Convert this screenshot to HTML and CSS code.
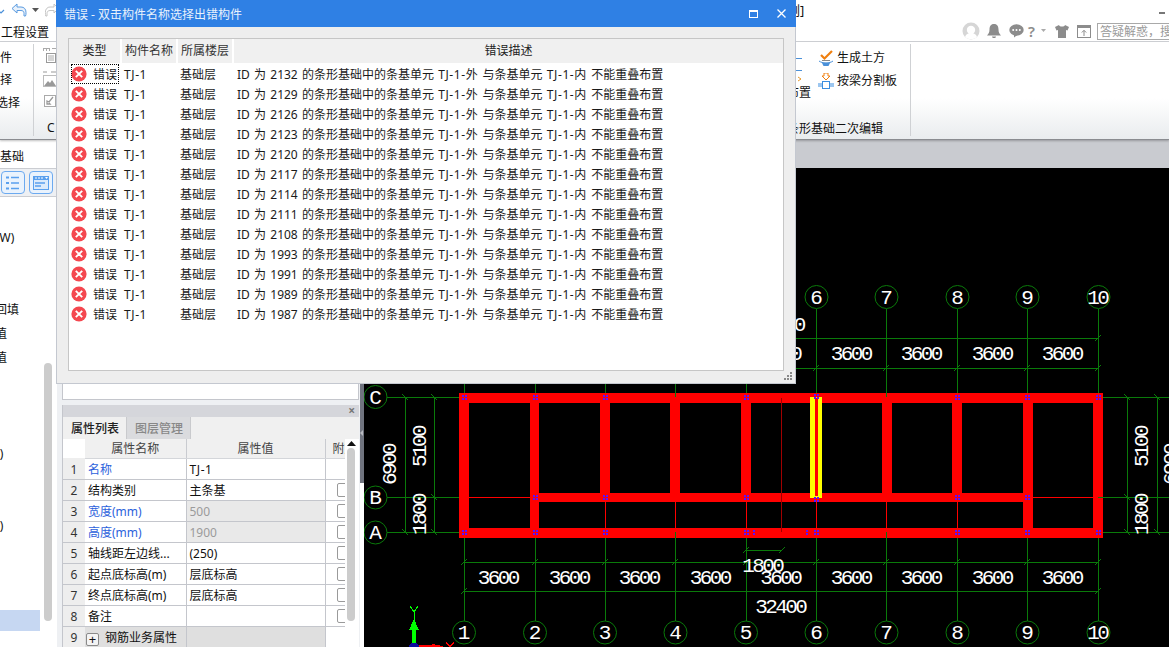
FILE: index.html
```html
<!DOCTYPE html>
<html lang="zh-CN">
<head>
<meta charset="utf-8">
<title>错误 - 双击构件名称选择出错构件</title>
<link rel="stylesheet" href="styles.css">
</head>
<body>
<svg class="sprite" width="0" height="0" aria-hidden="true">
  <defs>
    <g id="err"><circle cx="8" cy="8" r="7.6" fill="#f4474f"/><path d="M4.800 4.800l6.400 6.400M11.200 4.800l-6.400 6.400" stroke="#fff" stroke-width="1.900" fill="none"/></g>
    <g id="m" fill="#5a10ff" shape-rendering="crispEdges"><rect x="-2" y="-2" width="2" height="2"/><rect x="1" y="-2" width="2" height="2"/><rect x="-2" y="1" width="2" height="2"/><rect x="1" y="1" width="2" height="2"/></g>
    <circle id="b" r="11.5" fill="#000" stroke="#0a7a0a"/>
  </defs>
</svg>
<div class="app">
  <header class="top">
    <div class="top-row">
      <div class="quick">
        <svg class="q-chev" width="6" height="20" viewBox="0 0 6 20"><path d="M-2 9l3 3 3-3" fill="none" stroke="#4a90d9" stroke-width="1.2"/></svg>
        <svg class="q-undo" width="16" height="14" viewBox="0 0 16 14"><path d="M6 1L1 5.500 6 10V7.500h4c2 0 3 1.200 3 3V13h1.500c.5-1 .5-2 .5-3.500C15 6 13 4 10 4H6z" fill="#e8f1fb" stroke="#5a9be0"/></svg>
        <svg class="q-drop" width="8" height="5" viewBox="0 0 8 5"><path d="M0 0h7L3.500 4z" fill="#555"/></svg>
        <svg class="q-redo" width="14" height="14" viewBox="0 0 14 14"><path d="M9 1l4.500 4.500L9 10V7.500H5c-2 0-3 1.200-3 3V13H.8C.3 12 .3 11 .3 9.500.3 6 2.500 4 5 4h4z" fill="#fff" stroke="#c4c4c4"/></svg>
      </div>
      <span class="doc-title">例]</span>
      <span class="min-btn"></span>
    </div>
    <div class="top-row top-row-2">
      <span class="menu-item">工程设置</span>
      <div class="tools">
        <svg width="18" height="18" viewBox="0 0 18 18"><circle cx="9" cy="9" r="8.500" fill="#d6d6d6"/><circle cx="9" cy="8" r="4.200" fill="#fff"/><path d="M3 15c1-3 3-4 6-4s5 1 6 4c-3 3-9 3-12 0z" fill="#fff"/></svg>
        <svg class="t-bell" width="14" height="15" viewBox="0 0 14 15"><path d="M7 0c-3.500 0-4.500 2.500-4.500 5.500 0 3-1 4.500-2.500 6h14c-1.500-1.500-2.500-3-2.500-6C11.500 2.500 10.500 0 7 0z" fill="#8c8c8c"/><path d="M5 12.500h4c0 2-4 2-4 0z" fill="#8c8c8c"/></svg>
        <svg class="t-chat" width="15" height="14" viewBox="0 0 15 14"><ellipse cx="7.500" cy="6" rx="7.200" ry="5.800" fill="#8c8c8c"/><path d="M5 10.500v3l4-3z" fill="#8c8c8c"/><circle cx="4.200" cy="6" r="1" fill="#fff"/><circle cx="7.500" cy="6" r="1" fill="#fff"/><circle cx="10.800" cy="6" r="1" fill="#fff"/></svg>
        <span class="t-help">?</span>
        <svg class="t-hdrop" width="6" height="4" viewBox="0 0 6 4"><path d="M0 0h5L2.500 3z" fill="#aaa"/></svg>
        <svg class="t-shirt" width="14" height="13" viewBox="0 0 14 13"><path d="M4 0L0 2l1.500 3.500L3 5v8h8V5l1.500.5L14 2l-4-2c-.5 2-5.500 2-6 0z" fill="#8c8c8c"/></svg>
        <svg class="t-up" width="14" height="13" viewBox="0 0 14 13"><rect x=".5" y=".5" width="13" height="12" fill="#fff" stroke="#8c8c8c"/><rect x="0" y="0" width="14" height="3" fill="#8c8c8c"/><path d="M7 11V5.500M4.800 7.500L7 5.300l2.200 2.200" fill="none" stroke="#8c8c8c"/></svg>
        <div class="search">答疑解惑，搜索</div>
      </div>
    </div>
  </header>

  <section class="ribbon">
    <div class="rib-a">
      <span class="rib-line clip-12">文件</span>
      <span class="rib-line clip-12">选择</span>
      <span class="rib-line clip-4">选择</span>
    </div>
    <div class="rib-b">
      <svg width="14" height="16" viewBox="0 0 14 16"><path d="M0 .5h7M9 .5h5M.5 0v3M6.500 0v3M3.500 0v3" stroke="#aaa" fill="none"/><rect x="3.500" y="5.500" width="9" height="9" fill="#fff" stroke="#999"/><path d="M5 8h6M5 10h6M5 12h6" stroke="#aaa"/></svg>
      <svg width="14" height="16" viewBox="0 0 14 16"><path d="M0 1h4M8 1h6" stroke="#999"/><rect x=".5" y="4.500" width="13" height="11" fill="#fff" stroke="#bbb"/><path d="M1 15l4-5 2 2 2-3 4 6z" fill="#999"/></svg>
      <svg width="14" height="14" viewBox="0 0 14 14"><rect x="1.500" y="1.500" width="11" height="11" fill="#fff" stroke="#aaa"/><path d="M10 3L6 8 4 7v3h3L6 9" fill="none" stroke="#999" stroke-width="1.300"/></svg>
      <span class="rib-b-label">C</span>
    </div>
    <div class="rib-gap"></div>
    <div class="rib-c">
      <div class="rib-c-main">
        <div class="rib-c-col1">
          <svg width="9" height="26" viewBox="0 0 9 26"><path d="M0 .5h6M0 12.500h6" stroke="#4a90d9" fill="none"/><path d="M2 19l3 2-3 2" stroke="#e89a2a" fill="none"/></svg>
          <span class="rib-cut">布置</span>
        </div>
        <div class="rib-c-col2">
          <div class="rib-act">
            <svg width="16" height="17" viewBox="0 0 16 17"><path d="M3 5l3.500 3.500L14 1" fill="none" stroke="#f08010" stroke-width="2.200"/><path d="M1 11c3 2.500 11 2.500 14 0" fill="none" stroke="#4a90d9"/><path d="M4 13h8l-1.500 3h-5z" fill="#4a90d9"/><path d="M4 10.500h8" stroke="#888"/></svg>
            <span>生成土方</span>
          </div>
          <div class="rib-act">
            <svg width="16" height="17" viewBox="0 0 16 17"><path d="M6 0h4v3h2L8 7 4 3h2z" fill="#fff" stroke="#f08010"/><rect x="4.500" y="8.500" width="7" height="7" fill="#fff" stroke="#3a8ee0"/><path d="M0 11h4M12 11h4M0 13h4M12 13h4" stroke="#3a8ee0"/></svg>
            <span>按梁分割板</span>
          </div>
        </div>
      </div>
      <span class="rib-c-label">条形基础二次编辑</span>
    </div>
    <div class="rib-tail"></div>
  </section>

  <main class="work">
    <aside class="side">
      <div class="side-nav">
        <div class="side-search">基础</div>
        <div class="side-btns">
          <button class="tool-btn" type="button"><svg width="14" height="14" viewBox="0 0 14 14"><path d="M0 1.500h3M0 7h3M0 12.500h3" stroke="#5aa0ee" stroke-width="2"/><path d="M5 1.500h8M5 7h8M5 12.500h8" stroke="#5aa0ee" stroke-width="1.300"/></svg></button>
          <button class="tool-btn" type="button"><svg width="16" height="14" viewBox="0 0 16 14"><rect width="16" height="14" fill="#5aa0ee"/><rect x="1" y="4" width="14" height="9" fill="#dcebfb"/><path d="M2 2h2M5 2h2M8 2h2" stroke="#fff"/><path d="M12 1h3l-1.500 2z" fill="#fff"/><path d="M2 7h10M2 10h6" stroke="#5aa0ee" stroke-width="1.300"/></svg></button>
        </div>
        <div class="side-list">
          <ul class="tree">
            <li class="clip-w">(W)</li><li></li><li></li>
            <li class="clip-5">回填</li><li class="clip-5">值</li><li class="clip-5">值</li>
            <li></li><li></li><li></li>
            <li class="clip-r">0)</li><li></li><li></li>
            <li class="clip-r">0)</li><li></li><li></li><li></li>
            <li class="sel"></li>
          </ul>
          <div class="side-track"><div class="side-thumb"></div></div>
        </div>
      </div>
      <div class="panes">
        <div class="pane-up"></div>
        <section class="props">
          <div class="props-head"><span class="props-x">×</span></div>
          <div class="tabs"><span class="tab on">属性列表</span><span class="tab">图层管理</span></div>
          <div class="props-body">
            <table class="ptable">
              <thead><tr><th class="n0"></th><th class="c-name">属性名称</th><th class="c-val">属性值</th><th class="c-att"><span class="att-clip">附加</span></th></tr></thead>
              <tbody>
                <tr><td class="n">1</td><td class="blue">名称</td><td class="tj">TJ-1</td><td class="att"></td></tr>
                <tr><td class="n">2</td><td>结构类别</td><td>主条基</td><td class="att"><i class="chk"></i></td></tr>
                <tr><td class="n">3</td><td class="blue">宽度(mm)</td><td class="ro">500</td><td class="att"><i class="chk"></i></td></tr>
                <tr><td class="n">4</td><td class="blue">高度(mm)</td><td class="ro">1900</td><td class="att"><i class="chk"></i></td></tr>
                <tr><td class="n">5</td><td>轴线距左边线...</td><td>(250)</td><td class="att"><i class="chk"></i></td></tr>
                <tr><td class="n">6</td><td>起点底标高(m)</td><td>层底标高</td><td class="att"><i class="chk"></i></td></tr>
                <tr><td class="n">7</td><td>终点底标高(m)</td><td>层底标高</td><td class="att"><i class="chk"></i></td></tr>
                <tr><td class="n">8</td><td>备注</td><td></td><td class="att"><i class="chk"></i></td></tr>
                <tr class="grp"><td class="n">9</td><td class="grp-name"><span class="plus">+</span>钢筋业务属性</td><td></td><td class="att"></td></tr>
              </tbody>
            </table>
            <div class="p-track"><svg class="p-up" width="9" height="5" viewBox="0 0 9 5"><path d="M4.500 0L9 5H0z" fill="#111"/></svg><div class="p-thumb"></div></div>
          </div>
        </section>
      </div>
    </aside>
    <div class="stage">
      <div class="stage-strip"></div>
      <div class="stage-row">
        <div class="splitter"><span class="split-grip"></span></div>
        <svg class="cad" width="805" height="479" viewBox="364 168 805 479">
          <g class="gl" shape-rendering="crispEdges">
            <path d="M464.500 309V393M535.500 309V393M605.500 309V393M675.500 309V397M746.500 309V393M816.500 309V397M886.500 309V397M957.500 309V393M1027.500 309V393M1098.500 309V393"/>
            <path d="M464.500 537V621M535.500 537V621M605.500 537V621M675.500 532V621M746.500 537V621M816.500 537V621M886.500 532V621M957.500 537V621M1027.500 537V621M1098.500 537V621"/>
            <path d="M464 338.500H1099M464 368.500H1099M464 562.500H1099M464 591.500H1099M746 550.500H782"/>
            <path d="M376 397.500H460M376 497.500H464M376 532.500H460M1098 397.500H1169M1098 497.500H1169M1098 532.500H1169"/>
            <path d="M405.500 397V533M434.500 397V533M1127.500 397V533M1157.500 397V533"/>
          </g>
          <path class="gl" d="M1095 341l6-6M461 371l6-6M532 371l6-6M602 371l6-6M672 371l6-6M743 371l6-6M813 371l6-6M883 371l6-6M954 371l6-6M1024 371l6-6M1095 371l6-6M461 565l6-6M532 565l6-6M602 565l6-6M672 565l6-6M743 565l6-6M813 565l6-6M883 565l6-6M954 565l6-6M1024 565l6-6M1095 565l6-6M461 594l6-6M1095 594l6-6M743 553l6-6M779 553l6-6M402 394l6 6M402 529l6 6M431 394l6 6M431 494l6 6M431 529l6 6M1124 394l6 6M1124 494l6 6M1124 529l6 6M1154 394l6 6M1154 529l6 6"/>

          <g fill="#f00" shape-rendering="crispEdges">
            <rect x="459" y="393" width="644" height="10"/>
            <rect x="530" y="493" width="503" height="9"/>
            <rect x="459" y="528" width="644" height="10"/>
            <rect x="459" y="393" width="10" height="145"/>
            <rect x="530" y="393" width="9" height="145"/>
            <rect x="600" y="393" width="10" height="109"/>
            <rect x="670" y="393" width="10" height="109"/>
            <rect x="741" y="393" width="10" height="109"/>
            <rect x="882" y="393" width="10" height="109"/>
            <rect x="952" y="393" width="10" height="109"/>
            <rect x="1023" y="393" width="10" height="145"/>
            <rect x="1093" y="393" width="10" height="145"/>
          </g>
          <g class="rl" shape-rendering="crispEdges">
            <path d="M469 497.500H530M1033 497.500H1093M605.500 502V528M675.500 502V528M746.500 502V528M816.500 502V528M886.500 502V528M957.500 502V528"/>
          </g>
          <path class="dl" shape-rendering="crispEdges" d="M781.500 398V532"/>
          <g class="gl" shape-rendering="crispEdges"><path d="M675.500 393V397M886.500 393V397M675.500 532V538M886.500 532V538M1098 497.500H1103"/></g>

          <g shape-rendering="crispEdges">
            <rect x="810" y="397" width="12" height="101" fill="#ff0"/>
            <rect x="815" y="398" width="3" height="98" fill="#f00"/>
          </g>

          <g>
            <use href="#m" x="464" y="397"/><use href="#m" x="535" y="397"/><use href="#m" x="605" y="397"/><use href="#m" x="746" y="397"/><use href="#m" x="816" y="396"/><use href="#m" x="957" y="397"/><use href="#m" x="1027" y="397"/><use href="#m" x="1098" y="397"/>
            <use href="#m" x="535" y="497"/><use href="#m" x="605" y="497"/><use href="#m" x="746" y="497"/><use href="#m" x="816" y="499"/><use href="#m" x="957" y="497"/><use href="#m" x="1027" y="497"/>
            <use href="#m" x="464" y="532"/><use href="#m" x="535" y="532"/><use href="#m" x="605" y="532"/><use href="#m" x="746" y="532"/><use href="#m" x="816" y="532"/><use href="#m" x="957" y="532"/><use href="#m" x="1027" y="532"/><use href="#m" x="1098" y="532"/>
            <g fill="#5a10ff" shape-rendering="crispEdges"><rect x="753" y="530" width="2" height="2"/><rect x="753" y="533" width="2" height="2"/><rect x="806" y="530" width="2" height="2"/><rect x="806" y="533" width="2" height="2"/></g>
          </g>

          <g>
            <use href="#b" x="464" y="297"/><use href="#b" x="535" y="297"/><use href="#b" x="605" y="297"/><use href="#b" x="675" y="297"/><use href="#b" x="746" y="297"/><use href="#b" x="816.500" y="297"/><use href="#b" x="886.500" y="297"/><use href="#b" x="957.500" y="297"/><use href="#b" x="1027.500" y="297"/><use href="#b" x="1098.500" y="297"/>
            <use href="#b" x="464" y="632.500"/><use href="#b" x="535" y="632.500"/><use href="#b" x="605" y="632.500"/><use href="#b" x="675.500" y="632.500"/><use href="#b" x="746" y="632.500"/><use href="#b" x="816.500" y="632.500"/><use href="#b" x="886.500" y="632.500"/><use href="#b" x="957.500" y="632.500"/><use href="#b" x="1027.500" y="632.500"/><use href="#b" x="1098.500" y="632.500"/>
            <use href="#b" x="375.500" y="397"/><use href="#b" x="375.500" y="497.500"/><use href="#b" x="375.500" y="532.500"/>
          </g>

          <g class="cad-t">
            <text x="816.500" y="303.500">6</text><text x="886.500" y="303.500">7</text><text x="957.500" y="303.500">8</text><text x="1027.500" y="303.500">9</text><text x="1098.500" y="303.500">10</text>
            <text x="464" y="639">1</text><text x="535" y="639">2</text><text x="605" y="639">3</text><text x="675.500" y="639">4</text><text x="746" y="639">5</text><text x="816.500" y="639">6</text><text x="886.500" y="639">7</text><text x="957.500" y="639">8</text><text x="1027.500" y="639">9</text><text x="1098.500" y="639">10</text>
            <text x="375.500" y="403.500">C</text><text x="375.500" y="504">B</text><text x="375.500" y="539">A</text>

            <text x="780" y="331">32400</text>
            <text x="781.500" y="360">3600</text><text x="852" y="360">3600</text><text x="922" y="360">3600</text><text x="993" y="360">3600</text><text x="1063" y="360">3600</text>
            <text x="499" y="584">3600</text><text x="570" y="584">3600</text><text x="640" y="584">3600</text><text x="711" y="584">3600</text><text x="781.500" y="584">3600</text><text x="852" y="584">3600</text><text x="922" y="584">3600</text><text x="993" y="584">3600</text><text x="1063" y="584">3600</text>
            <text x="763.500" y="572">1800</text>
            <text x="781.500" y="613">32400</text>

            <text transform="translate(397 465) rotate(-90)">6900</text>
            <text transform="translate(427 447) rotate(-90)">5100</text>
            <text transform="translate(427 515) rotate(-90)">1800</text>
            <text transform="translate(1149 447) rotate(-90)">5100</text>
            <text transform="translate(1149 515) rotate(-90)">1800</text>
            <text transform="translate(1178 465) rotate(-90)">6900</text>
          </g>

          <g shape-rendering="crispEdges">
            <path d="M410 606l4 6 4-6M414 612V620" fill="none" stroke="#0f0"/>
            <path d="M414 619l5 11h-3v13h-4V630h-3z" fill="#0f0"/>
            <circle cx="414" cy="648" r="5.500" fill="#0a0a9a"/>
            <path d="M419 645h13v-1l11 2v1H419z" fill="#f00"/>
            <path d="M446 642l4 5 4-5M450 647v3" fill="none" stroke="#f00" stroke-width="1.300"/>
          </g>
        </svg>
      </div>
    </div>
  </main>

  <section class="dialog" role="dialog">
    <div class="dlg-bar">
      <span class="dlg-title">错误 - 双击构件名称选择出错构件</span>
      <div class="dlg-ctl">
        <svg width="9" height="8" viewBox="0 0 9 8"><rect x=".5" y="1" width="8" height="6.500" fill="none" stroke="#fff"/><path d="M0 1h9" stroke="#fff" stroke-width="2"/></svg>
        <svg width="9" height="9" viewBox="0 0 9 9"><path d="M.5.500l8 8M8.500.500l-8 8" stroke="#fff" stroke-width="1.300"/></svg>
      </div>
    </div>
    <div class="dlg-body">
      <div class="dlg-box">
        <table class="errs">
          <thead>
            <tr><th class="e1"><span>类型</span></th><th class="e2"><span>构件名称</span></th><th class="e3"><span>所属楼层</span></th><th class="e4"><span>错误描述</span></th></tr>
          </thead>
          <tbody>
            <tr><td><div class="etype focus"><svg width="16" height="16"><use href="#err"/></svg><span>错误</span></div></td><td class="tj">TJ-1</td><td>基础层</td><td class="desc">ID 为 2132 的条形基础中的条基单元 <span class="tj">TJ-1-外</span> 与条基单元 <span class="tj">TJ-1-内</span> 不能重叠布置</td></tr>
            <tr><td><div class="etype"><svg width="16" height="16"><use href="#err"/></svg><span>错误</span></div></td><td class="tj">TJ-1</td><td>基础层</td><td class="desc">ID 为 2129 的条形基础中的条基单元 <span class="tj">TJ-1-外</span> 与条基单元 <span class="tj">TJ-1-内</span> 不能重叠布置</td></tr>
            <tr><td><div class="etype"><svg width="16" height="16"><use href="#err"/></svg><span>错误</span></div></td><td class="tj">TJ-1</td><td>基础层</td><td class="desc">ID 为 2126 的条形基础中的条基单元 <span class="tj">TJ-1-外</span> 与条基单元 <span class="tj">TJ-1-内</span> 不能重叠布置</td></tr>
            <tr><td><div class="etype"><svg width="16" height="16"><use href="#err"/></svg><span>错误</span></div></td><td class="tj">TJ-1</td><td>基础层</td><td class="desc">ID 为 2123 的条形基础中的条基单元 <span class="tj">TJ-1-外</span> 与条基单元 <span class="tj">TJ-1-内</span> 不能重叠布置</td></tr>
            <tr><td><div class="etype"><svg width="16" height="16"><use href="#err"/></svg><span>错误</span></div></td><td class="tj">TJ-1</td><td>基础层</td><td class="desc">ID 为 2120 的条形基础中的条基单元 <span class="tj">TJ-1-外</span> 与条基单元 <span class="tj">TJ-1-内</span> 不能重叠布置</td></tr>
            <tr><td><div class="etype"><svg width="16" height="16"><use href="#err"/></svg><span>错误</span></div></td><td class="tj">TJ-1</td><td>基础层</td><td class="desc">ID 为 2117 的条形基础中的条基单元 <span class="tj">TJ-1-外</span> 与条基单元 <span class="tj">TJ-1-内</span> 不能重叠布置</td></tr>
            <tr><td><div class="etype"><svg width="16" height="16"><use href="#err"/></svg><span>错误</span></div></td><td class="tj">TJ-1</td><td>基础层</td><td class="desc">ID 为 2114 的条形基础中的条基单元 <span class="tj">TJ-1-外</span> 与条基单元 <span class="tj">TJ-1-内</span> 不能重叠布置</td></tr>
            <tr><td><div class="etype"><svg width="16" height="16"><use href="#err"/></svg><span>错误</span></div></td><td class="tj">TJ-1</td><td>基础层</td><td class="desc">ID 为 2111 的条形基础中的条基单元 <span class="tj">TJ-1-外</span> 与条基单元 <span class="tj">TJ-1-内</span> 不能重叠布置</td></tr>
            <tr><td><div class="etype"><svg width="16" height="16"><use href="#err"/></svg><span>错误</span></div></td><td class="tj">TJ-1</td><td>基础层</td><td class="desc">ID 为 2108 的条形基础中的条基单元 <span class="tj">TJ-1-外</span> 与条基单元 <span class="tj">TJ-1-内</span> 不能重叠布置</td></tr>
            <tr><td><div class="etype"><svg width="16" height="16"><use href="#err"/></svg><span>错误</span></div></td><td class="tj">TJ-1</td><td>基础层</td><td class="desc">ID 为 1993 的条形基础中的条基单元 <span class="tj">TJ-1-外</span> 与条基单元 <span class="tj">TJ-1-内</span> 不能重叠布置</td></tr>
            <tr><td><div class="etype"><svg width="16" height="16"><use href="#err"/></svg><span>错误</span></div></td><td class="tj">TJ-1</td><td>基础层</td><td class="desc">ID 为 1991 的条形基础中的条基单元 <span class="tj">TJ-1-外</span> 与条基单元 <span class="tj">TJ-1-内</span> 不能重叠布置</td></tr>
            <tr><td><div class="etype"><svg width="16" height="16"><use href="#err"/></svg><span>错误</span></div></td><td class="tj">TJ-1</td><td>基础层</td><td class="desc">ID 为 1989 的条形基础中的条基单元 <span class="tj">TJ-1-外</span> 与条基单元 <span class="tj">TJ-1-内</span> 不能重叠布置</td></tr>
            <tr><td><div class="etype"><svg width="16" height="16"><use href="#err"/></svg><span>错误</span></div></td><td class="tj">TJ-1</td><td>基础层</td><td class="desc">ID 为 1987 的条形基础中的条基单元 <span class="tj">TJ-1-外</span> 与条基单元 <span class="tj">TJ-1-内</span> 不能重叠布置</td></tr>
          </tbody>
        </table>
      </div>
      <svg class="grip" width="9" height="9" viewBox="0 0 9 9"><path d="M6 0h2v2H6zM3 3h2v2H3zM6 3h2v2H6zM0 6h2v2H0zM3 6h2v2H3zM6 6h2v2H6z" fill="#888"/></svg>
    </div>
  </section>
</div>
</body>
</html>
```

FILE: styles.css
```css
* { box-sizing: border-box; }
html, body { margin: 0; padding: 0; background: #fff; }
body { font: 12px/1.2 "Noto Sans", "Noto Sans CJK SC", sans-serif; color: #111; overflow: hidden; }
.sprite { position: absolute; }
svg { flex-shrink: 0; }
.tj { letter-spacing: .6px; }

.app {
  position: relative;
  width: 1169px;
  height: 647px;
  overflow: hidden;
  display: grid;
  grid-template-rows: 42px 98px 507px;
  background: #fff;
}

/* top bar */
.top { display: flex; flex-direction: column; border-bottom: 1px solid #d0d2d6; background: #fff; }
.top-row { display: flex; align-items: center; height: 21px; }
.top-row-2 { height: 20px; }
.quick { display: flex; align-items: center; height: 20px; }
.q-chev { margin-right: 5px; }
.q-undo { margin-right: 5px; margin-top: -2px; }
.q-drop { margin-right: 5px; }
.q-redo { margin-top: -2px; }
.doc-title { margin-left: auto; font-size: 13px; margin-right: 356px; width: 16px; white-space: nowrap; padding-top: 1px; }
.min-btn { width: 6px; height: 2px; background: #777; margin-right: 4px; margin-top: 5px; }
.menu-item { margin-left: 1px; font-size: 12px; line-height: 20px; padding-top: 3px; }
.tools { margin-left: auto; display: flex; align-items: center; width: 207px; flex-shrink: 0; }
.t-bell { margin-left: 7px; }
.t-chat { margin-left: 8px; }
.t-help { margin-left: 4px; font-size: 15px; line-height: 16px; color: #8c8c8c; font-weight: 600; width: 9px; }
.t-hdrop { margin-left: 6px; }
.t-shirt { margin-left: 8px; }
.t-up { margin-left: 8px; }
.search {
  margin-left: 6px;
  width: 80px;
  flex-shrink: 0;
  height: 17px;
  border: 1px solid #a9a9a9;
  border-right: 0;
  padding-left: 2px;
  font-size: 12px;
  line-height: 15px;
  color: #9a9a9a;
  white-space: nowrap;
  overflow: hidden;
}

/* ribbon */
.ribbon {
  display: flex;
  background: linear-gradient(#fff 0, #fff 58%, #e9ecee 100%);
  border-bottom: 1px solid #8a8c90;
  box-shadow: 0 1px 2px rgba(0,0,0,.25);
  position: relative;
  z-index: 1;
}
.rib-a {
  width: 34px;
  margin: 2px 0 3px;
  padding-top: 7px;
  border-right: 1px solid #cfd1d4;
  display: flex;
  flex-direction: column;
  gap: 8px;
  overflow: hidden;
}
.rib-line { line-height: 14.400px; white-space: nowrap; }
.clip-12 { margin-left: -12px; }
.clip-4 { margin-left: -4px; }
.clip-5 { margin-left: -5px; }
.rib-b {
  width: 40px;
  padding: 6px 0 0 9px;
  display: flex;
  flex-direction: column;
  align-items: flex-start;
  gap: 7px;
}
.rib-b-label { margin-top: 6px; margin-left: 4px; font-size: 12px; }
.rib-gap { flex: 1; }
.rib-c {
  width: 124px;
  margin: 2px 0 3px;
  border-right: 1px solid #cfd1d4;
  display: flex;
  flex-direction: column;
  justify-content: space-between;
}
.rib-c-main { display: flex; padding-top: 6px; }
.rib-c-col1 { width: 31px; padding-left: 9px; display: flex; flex-direction: column; align-items: flex-start; padding-top: 8px; }
.rib-cut { margin-left: -9px; margin-top: 2px; white-space: nowrap; }
.rib-c-col2 { display: flex; flex-direction: column; gap: 6px; }
.rib-act { display: flex; align-items: center; gap: 3px; height: 17px; white-space: nowrap; }
.rib-c-label { white-space: nowrap; }
.rib-tail { width: 258px; }

/* work area */
.work { display: grid; grid-template-columns: 360px 809px; min-height: 0; }
.side { display: grid; grid-template-columns: 57px 303px; min-height: 0; }
.side-nav { display: flex; flex-direction: column; padding-top: 4px; border-right: 1px solid #c6cad2; width: 58px; }
.side-search { height: 24px; line-height: 25px; white-space: nowrap; }
.side-btns {
  display: flex;
  gap: 4px;
  height: 29px;
  padding: 2px 0 3px 1px;
  background: #eef0f3;
  border-bottom: 1px solid #cbcdd2;
  border-top: 1px solid #cbcdd2;
}
.tool-btn {
  width: 24px;
  height: 23px;
  padding: 0;
  border: 1px solid #6caaf0;
  border-radius: 4px;
  background: #eaf3fd;
  display: flex;
  align-items: center;
  justify-content: center;
}
.side-list { flex: 1; display: flex; min-height: 0; }
.tree { list-style: none; margin: 0; padding: 28px 0 0; width: 44px; overflow: hidden; }
.tree li { height: 24px; line-height: 26px; white-space: nowrap; }
.clip-w { margin-left: -4px; }
.clip-r { margin-left: -7px; }
.tree .sel { background: #c6d7f2; width: 40px; height: 21px; margin-top: 1px; }
.side-track { width: 8px; padding-top: 166px; }
.side-thumb { height: 258px; background: #ccc; border-radius: 4px; }

.panes { background: #eef0f3; padding-left: 5px; display: flex; flex-direction: column; gap: 5px; }
.pane-up { height: 260px; background: #fff; border: 1px solid #c4c6cc; border-top: 0; margin-right: 1px; }
.props { flex: 1; min-height: 0; background: #fff; border-left: 1px solid #c4c6cc; display: flex; flex-direction: column; margin-right: 1px; }
.props-head { height: 12px; background: #d5d6db; display: flex; justify-content: flex-end; align-items: center; padding-right: 4px; }
.props-x { color: #777; font-size: 12px; line-height: 12px; font-weight: 700; }
.tabs { height: 22px; background: #f0f0f0; display: flex; flex-shrink: 0; }
.tab { width: 64px; text-align: center; line-height: 24px; color: #888; background: #dadbde; border-right: 1px solid #c9cacd; font-weight: 500; padding-left: 1px; }
.tab.on { color: #222; background: #f0f0f0; }
.props-body { flex: 1; min-height: 0; display: flex; overflow: hidden; }
.ptable { width: 282px; flex-shrink: 0; table-layout: fixed; border-collapse: collapse; align-self: flex-start; }
.ptable th { height: 19px; font-weight: 400; padding: 1px 0 0; background: #f0f0f0; color: #444; border-right: 1px solid #c9cbd0; border-bottom: 1px solid #d4d6da; }
.ptable .n0 { width: 22px; background: #fff; border-right: 0; border-bottom: 0; }
.ptable .c-name { width: 101px; }
.ptable .c-val { width: 139px; }
.ptable .c-att { width: 20px; border-right: 0; overflow: hidden; }
.att-clip { display: block; width: 20px; white-space: nowrap; overflow: hidden; padding-left: 7px; }
.ptable td { height: 21px; padding: 3px 3px 0; border-right: 1px solid #c4c6cc; border-bottom: 1px solid #c4c6cc; white-space: nowrap; overflow: hidden; }
.ptable .n { background: #eeeeee; text-align: center; padding: 3px 0 0; color: #333; border-right: 0; }
.ptable .blue { color: #2c62dc; }
.ptable .ro { background: #e9e9e9; color: #9b9b9b; }
.ptable .att { border-right: 0; padding: 0 0 0 11px; overflow: hidden; }
.chk { display: block; width: 14px; height: 14px; border: 1px solid #9a9a9a; border-radius: 2px; background: #fff; }
.grp td { background: #dfdfdf; }
.grp td.n { background: #eee; }
.grp td.att { background: #fff; }
.ptable .grp-name { padding-left: 1px; }
.plus { display: inline-block; width: 13px; height: 13px; margin-right: 6px; border: 1px solid #8a8a8a; border-radius: 2px; background: #f4f4f4; line-height: 10px; text-align: center; font-size: 13px; vertical-align: -2px; }
.p-track { flex: 1; position: relative; display: flex; flex-direction: column; align-items: center; padding: 2px 1px 0 0; border-right: 1px solid transparent; }
.p-up { flex-shrink: 0; }
.p-thumb { width: 8px; height: 173px; margin-top: 2px; background: #ccc; border-radius: 4px; }

.stage { display: flex; flex-direction: column; min-width: 0; }
.stage-strip { height: 28px; background: #c9cbd0; }
.stage-row { flex: 1; display: flex; min-height: 0; }
.splitter { width: 4px; height: 100%; background: linear-gradient(#70747f 0, #70747f 315px, #fff 315px); position: relative; }
.split-grip { position: absolute; left: 0; top: 262px; border: 3px solid transparent; border-left: 0; border-right: 3px solid #b8bac0; }
.cad { display: block; background: #000; flex-shrink: 0; }
.gl { fill: none; stroke: #0a7a0a; stroke-width: 1; }
.rl { fill: none; stroke: #f00; stroke-width: 1; }
.dl { fill: none; stroke: #a00000; stroke-width: 1; }
.cad-t { transform: translateX(-1.300px); }
.cad-t text { font-family: "Liberation Mono", monospace; font-size: 21px; letter-spacing: -2.600px; fill: #fff; text-anchor: middle; }

/* dialog */
.dialog {
  position: absolute;
  left: 56px;
  top: 0;
  width: 740px;
  height: 384px;
  z-index: 5;
  background: #eeeeee;
  border: 1px solid #c4c8d0;
  border-top: 0;
  display: flex;
  flex-direction: column;
}
.dlg-bar { height: 27px; margin: 0 -1px; background: #2f80e4; color: #e8f1fc; display: flex; align-items: center; justify-content: space-between; padding: 0 10px 0 8px; flex-shrink: 0; }
.dlg-title { font-size: 12px; padding-top: 3px; }
.dlg-ctl { display: flex; gap: 19px; align-items: center; }
.dlg-body { flex: 1; padding: 11px 11px 12px 11px; position: relative; }
.dlg-box { height: 100%; background: #fff; border: 1px solid #c6c6c6; overflow: hidden; }
.grip { position: absolute; right: 2px; bottom: 2px; }

.errs { width: 100%; table-layout: fixed; border-collapse: collapse; }
.errs th { height: 25px; padding: 0 2px 1px 0; font-weight: 400; }
.errs th.e4 { padding-right: 0; }
.errs th span { display: flex; align-items: center; justify-content: center; height: 24px; padding-top: 1px; background: #f0f0f0; color: #222; }
.errs th.e2 span, .errs th.e3 span { color: #333; }
.e1 { width: 53px; }
.e2 { width: 56px; }
.e3 { width: 56px; }
.errs td { height: 20px; padding: 2px 0 0 2px; white-space: nowrap; overflow: hidden; vertical-align: middle; color: #1a1a1a; }
.errs td.desc { padding-left: 3px; word-spacing: 1.100px; }
.errs td:first-child { padding: 0 0 0 2px; }
.etype { display: flex; align-items: center; height: 20px; width: 48px; gap: 6px; }
.etype svg { margin-top: -1px; }
.etype span { padding-top: 2px; }
.etype.focus { outline: 1px dotted #000; outline-offset: -1px; }
```
